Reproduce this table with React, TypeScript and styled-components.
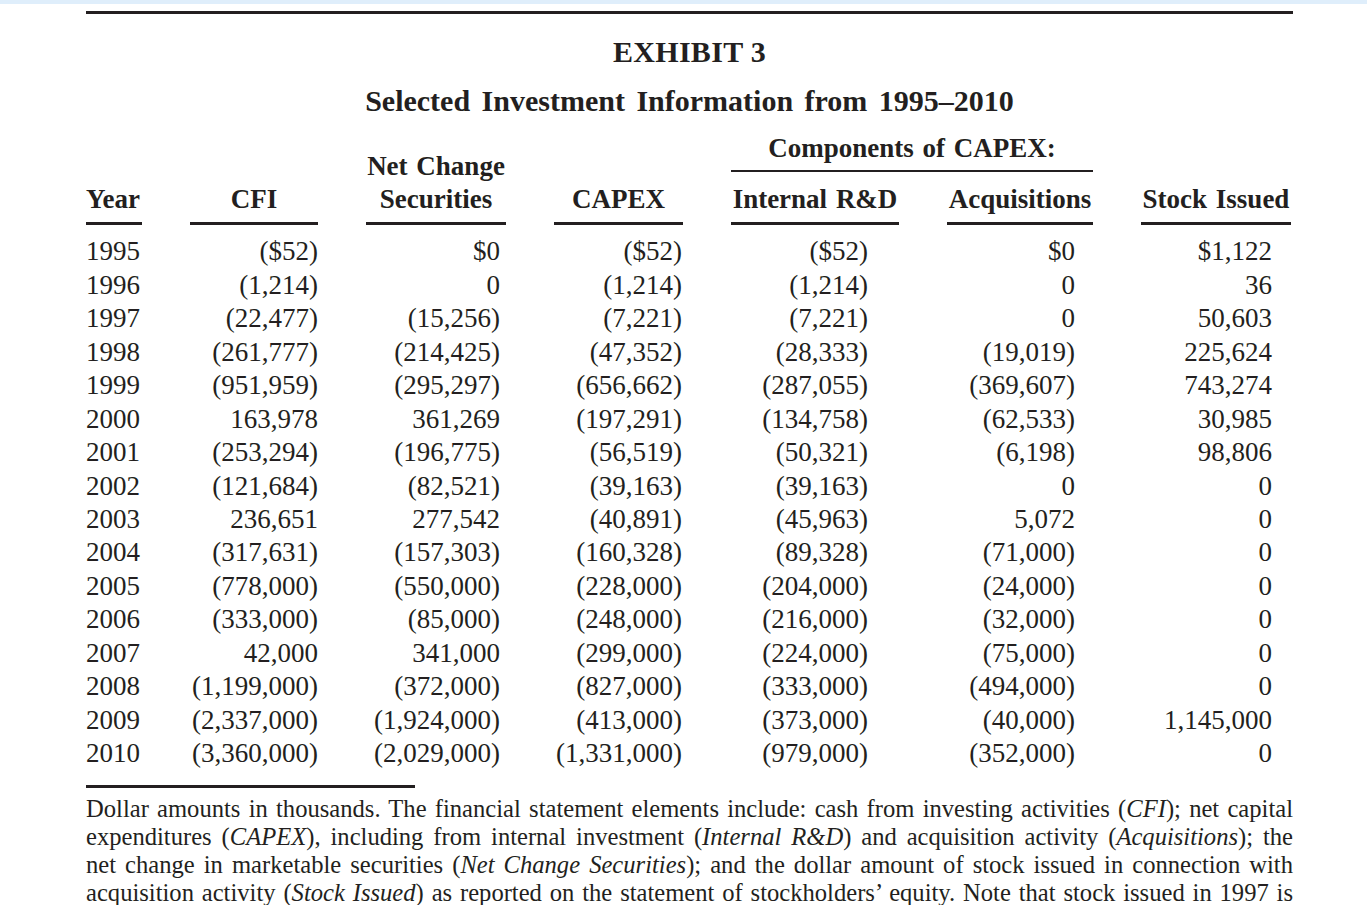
import React from "react";
import styled, { createGlobalStyle } from "styled-components";

const INK = "#231f20";
const COLUMNS = "56px 128px 140px 129px 168px 146px 150px";

type Align = "left" | "center" | "right";

interface ColumnSpec {
	key: string;
	label: React.ReactNode;
	align: Align;
	inset: number;
}

const columnSpecs: ColumnSpec[] = [
	{ key: "year", label: "Year", align: "left", inset: 0 },
	{ key: "cfi", label: "CFI", align: "right", inset: 0 },
	{ key: "ncs", label: "Net Change Securities", align: "right", inset: 6 },
	{ key: "capex", label: "CAPEX", align: "right", inset: 1 },
	{ key: "ird", label: "Internal R&D", align: "right", inset: 31 },
	{ key: "acq", label: "Acquisitions", align: "right", inset: 18 },
	{ key: "stock", label: "Stock Issued", align: "right", inset: 19 },
];

const rows: string[][] = [
	["1995", "($52)", "$0", "($52)", "($52)", "$0", "$1,122"],
	["1996", "(1,214)", "0", "(1,214)", "(1,214)", "0", "36"],
	["1997", "(22,477)", "(15,256)", "(7,221)", "(7,221)", "0", "50,603"],
	["1998", "(261,777)", "(214,425)", "(47,352)", "(28,333)", "(19,019)", "225,624"],
	["1999", "(951,959)", "(295,297)", "(656,662)", "(287,055)", "(369,607)", "743,274"],
	["2000", "163,978", "361,269", "(197,291)", "(134,758)", "(62,533)", "30,985"],
	["2001", "(253,294)", "(196,775)", "(56,519)", "(50,321)", "(6,198)", "98,806"],
	["2002", "(121,684)", "(82,521)", "(39,163)", "(39,163)", "0", "0"],
	["2003", "236,651", "277,542", "(40,891)", "(45,963)", "5,072", "0"],
	["2004", "(317,631)", "(157,303)", "(160,328)", "(89,328)", "(71,000)", "0"],
	["2005", "(778,000)", "(550,000)", "(228,000)", "(204,000)", "(24,000)", "0"],
	["2006", "(333,000)", "(85,000)", "(248,000)", "(216,000)", "(32,000)", "0"],
	["2007", "42,000", "341,000", "(299,000)", "(224,000)", "(75,000)", "0"],
	["2008", "(1,199,000)", "(372,000)", "(827,000)", "(333,000)", "(494,000)", "0"],
	["2009", "(2,337,000)", "(1,924,000)", "(413,000)", "(373,000)", "(40,000)", "1,145,000"],
	["2010", "(3,360,000)", "(2,029,000)", "(1,331,000)", "(979,000)", "(352,000)", "0"],
];

const noteLines: React.ReactNode[] = [
	<>
		Dollar amounts in thousands. The financial statement elements include: cash from investing activities (
		<i>CFI</i>); net capital
	</>,
	<>
		expenditures (<i>CAPEX</i>), including from internal investment (<i>Internal R&amp;D</i>) and acquisition
		activity (<i>Acquisitions</i>); the
	</>,
	<>
		net change in marketable securities (<i>Net Change Securities</i>); and the dollar amount of stock issued in
		connection with
	</>,
	<>
		acquisition activity (<i>Stock Issued</i>) as reported on the statement of stockholders’ equity. Note that
		stock issued in 1997 is
	</>,
];

export default function App() {
	return (
		<>
			<GlobalStyle />
			<TopStrip />
			<Page>
				<HeavyRule />
				<Title>EXHIBIT 3</Title>
				<Subtitle>Selected Investment Information from 1995–2010</Subtitle>

				<HeaderGrid>
					<GroupLabel>Components of CAPEX:</GroupLabel>
					{columnSpecs.map((column) =>
						column.key === "ncs" ? (
							<HeaderCell key={column.key} $align="center" $span>
								Net Change
								<br />
								Securities
							</HeaderCell>
						) : (
							<HeaderCell key={column.key} $align={column.align === "left" ? "left" : "center"}>
								{column.label}
							</HeaderCell>
						),
					)}
				</HeaderGrid>

				<Body>
					{rows.map((row) => (
						<DataRow key={row[0]}>
							{row.map((value, index) => (
								<DataCell
									key={columnSpecs[index].key}
									$align={columnSpecs[index].align}
									$inset={columnSpecs[index].inset}
								>
									{value}
								</DataCell>
							))}
						</DataRow>
					))}
				</Body>

				<ShortRule />

				<Note>
					{noteLines.map((line, index) => (
						<NoteLine key={index}>{line}</NoteLine>
					))}
				</Note>
			</Page>
		</>
	);
}

//#region Styled Components

const GlobalStyle = createGlobalStyle`
	html, body {
		margin: 0;
		padding: 0;
		background: #ffffff;
	}
	body {
		font-family: "Liberation Serif", "Times New Roman", serif;
		color: ${INK};
	}
`;

const TopStrip = styled.div`
	height: 4px;
	background: #dfeefb;
`;

const Page = styled.div`
	width: 1207px;
	margin-left: 86px;
	padding-top: 7px;
	display: flex;
	flex-direction: column;
`;

const HeavyRule = styled.div`
	height: 3px;
	background: ${INK};
`;

const Title = styled.h1`
	margin: 20px 0 0;
	font-size: 30px;
	line-height: 36px;
	font-weight: 700;
	text-align: center;
	letter-spacing: 0.3px;
`;

const Subtitle = styled.h2`
	margin: 13px 0 0;
	font-size: 30px;
	line-height: 36px;
	font-weight: 700;
	text-align: center;
	word-spacing: 4px;
`;

const HeaderGrid = styled.div`
	margin-top: 13px;
	display: grid;
	grid-template-columns: ${COLUMNS};
	grid-template-rows: auto auto;
	column-gap: 48px;
	row-gap: 11px;
	font-size: 27px;
	font-weight: 700;
	line-height: 33px;
	word-spacing: 2px;
`;

const GroupLabel = styled.div`
	grid-column: 5 / 7;
	grid-row: 1;
	padding-bottom: 5px;
	border-bottom: 2px solid ${INK};
	text-align: center;
`;

const HeaderCell = styled.div<{ $align: Align; $span?: boolean }>`
	grid-row: ${(p) => (p.$span ? "1 / 3" : "2")};
	align-self: end;
	padding-bottom: 6px;
	border-bottom: 3px solid ${INK};
	text-align: ${(p) => p.$align};
	white-space: nowrap;
`;

const Body = styled.div`
	margin-top: 10px;
	display: flex;
	flex-direction: column;
`;

const DataRow = styled.div`
	display: grid;
	grid-template-columns: ${COLUMNS};
	column-gap: 48px;
	height: 33.47px;
	align-items: center;
	font-size: 27px;
	line-height: 33px;
`;

const DataCell = styled.div<{ $align: Align; $inset: number }>`
	text-align: ${(p) => p.$align};
	padding-right: ${(p) => p.$inset}px;
	white-space: nowrap;
`;

const ShortRule = styled.div`
	margin-top: 14px;
	width: 329px;
	height: 3px;
	background: ${INK};
`;

const Note = styled.div`
	margin-top: 7px;
	display: flex;
	flex-direction: column;
	font-size: 24.6px;
	line-height: 28px;
`;

const NoteLine = styled.div`
	text-align: justify;
	text-align-last: justify;
	white-space: nowrap;
`;
//#endregion
